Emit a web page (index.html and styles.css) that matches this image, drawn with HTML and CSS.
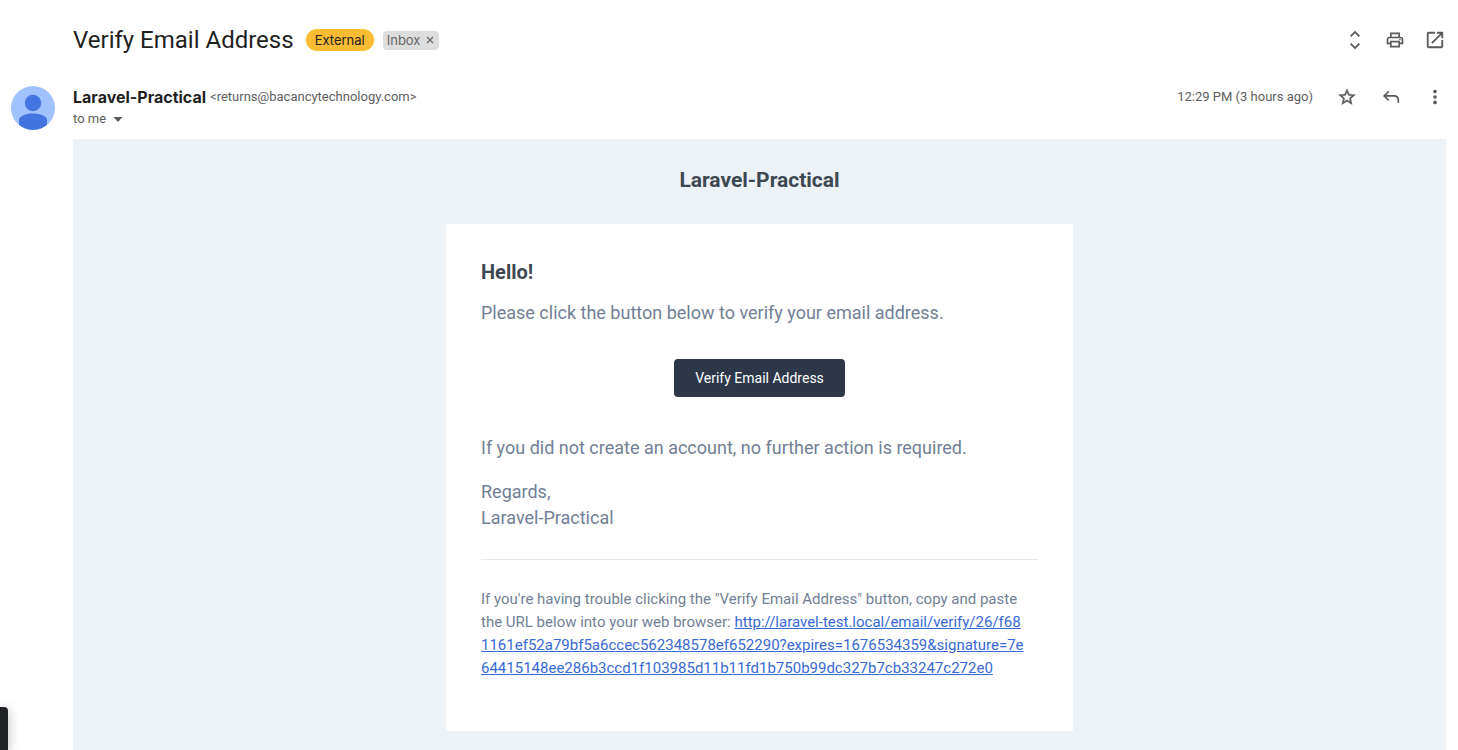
FILE: index.html
```html
<!DOCTYPE html>
<html lang="en">
<head>
<meta charset="utf-8">
<meta name="viewport" content="width=device-width, initial-scale=1">
<title>Verify Email Address</title>
<link rel="stylesheet" href="styles.css">
</head>
<body>
<main class="message">
  <header class="subject-bar">
    <h1 class="subject">Verify Email Address</h1>
    <span class="tag-external">External</span>
    <span class="tag-inbox">Inbox
      <button class="tag-remove" type="button" aria-label="Remove label Inbox"><svg width="8" height="8" viewBox="0 0 8 8"><path d="M1 1l6 6M7 1L1 7" stroke="#666" stroke-width="1.2" fill="none"/></svg></button>
    </span>
    <div class="subject-tools">
      <button class="icon-button" type="button" aria-label="Expand all"><svg width="20" height="20" viewBox="1 1 22 22"><path d="M12 4.600l4.100 4.100 1.400-1.400L12 1.800 6.500 7.300l1.400 1.400zM12 19.400l-4.100-4.100-1.400 1.400 5.500 5.500 5.500-5.500-1.400-1.400z"/></svg></button>
      <button class="icon-button" type="button" aria-label="Print"><svg width="20" height="20" viewBox="0 0 24 24"><path d="M19 8h-1V3H6v5H5c-1.660 0-3 1.340-3 3v6h4v4h12v-4h4v-6c0-1.660-1.340-3-3-3zM8 5h8v3H8V5zm8 14H8v-4h8v4zm2-4v-2H6v2H4v-4c0-.55.45-1 1-1h14c.55 0 1 .45 1 1v4h-2z"/><circle cx="18" cy="11.500" r="1"/></svg></button>
      <button class="icon-button" type="button" aria-label="Open in new window"><svg width="20" height="20" viewBox="1 1 22 22"><path d="M19 19H5V5h7V3H5a2 2 0 0 0-2 2v14a2 2 0 0 0 2 2h14c1.100 0 2-.9 2-2v-7h-2v7zM14 3v2h3.590l-9.830 9.830 1.410 1.410L19 6.410V10h2V3h-7z"/></svg></button>
    </div>
  </header>

  <section class="sender-bar">
    <svg class="avatar" width="44" height="44" viewBox="0 0 44 44" role="img" aria-label="Sender">
      <clipPath id="disc"><circle cx="22" cy="22" r="22"/></clipPath>
      <g clip-path="url(#disc)">
        <path fill="#a0c3ff" d="M0 0h44v44H0z"/>
        <circle cx="22" cy="17" r="8.200" fill="#4374e0"/>
        <path fill="#4374e0" d="M8 46V34c0-4 7-6.500 14-6.500S36 30 36 34v12z"/>
      </g>
    </svg>
    <div class="sender">
      <div class="sender-line"><strong class="sender-name">Laravel-Practical</strong> <span class="sender-email">&lt;returns@bacancytechnology.com&gt;</span></div>
      <div class="recipient">to me <button class="details" type="button" aria-label="Show details"><svg width="10" height="5" viewBox="0 0 10 5"><path d="M.5 0h9L5 5z"/></svg></button></div>
    </div>
    <div class="sender-tools">
      <time class="sent">12:29 PM (3 hours ago)</time>
      <button class="icon-button" type="button" aria-label="Star"><svg width="20" height="20" viewBox="0 0 24 24"><path stroke="#5a5a5a" stroke-width=".5" d="M22 9.240l-7.190-.62L12 2 9.190 8.630 2 9.240l5.460 4.730L5.820 21 12 17.270 18.180 21l-1.630-7.030L22 9.240zM12 15.400l-3.760 2.270 1-4.280-3.320-2.880 4.380-.38L12 6.100l1.710 4.040 4.380.38-3.320 2.880 1 4.280L12 15.400z"/></svg></button>
      <button class="icon-button" type="button" aria-label="Reply"><svg width="20" height="20" viewBox="0 0 24 24"><path fill="none" stroke="#5a5a5a" stroke-width="2" d="M9.300 5.200L3.800 10.700l5.500 5.500M4 10.700h11.500c3.500 0 5.300 2.300 5.300 5.300v3"/></svg></button>
      <button class="icon-button" type="button" aria-label="More"><svg width="20" height="20" viewBox="0 0 24 24"><circle cx="12" cy="5.500" r="2.200"/><circle cx="12" cy="12" r="2.200"/><circle cx="12" cy="18.500" r="2.200"/></svg></button>
    </div>
  </section>

  <article class="mail">
    <h2 class="brand">Laravel-Practical</h2>
    <div class="card">
      <h3 class="greeting">Hello!</h3>
      <p class="copy">Please click the button below to verify your email address.</p>
      <div class="action"><button class="verify" type="button">Verify Email Address</button></div>
      <p class="copy">If you did not create an account, no further action is required.</p>
      <p class="copy">Regards,<br>Laravel-Practical</p>
      <p class="fallback">If you're having trouble clicking the "Verify Email Address" button, copy and paste the URL below into your web browser: <a class="url" href="http://laravel-test.local/email/verify/26/f681161ef52a79bf5a6ccec562348578ef652290?expires=1676534359&amp;signature=7e64415148ee286b3ccd1f103985d11b11fd1b750b99dc327b7cb33247c272e0">http://laravel-test.local/email/verify/26/f68<wbr>1161ef52a79bf5a6ccec562348578ef652290?expires=1676534359&amp;signature=7e<wbr>64415148ee286b3ccd1f103985d11b11fd1b750b99dc327b7cb33247c272e0</a></p>
    </div>
  </article>
</main>
<div class="corner-panel"></div>
</body>
</html>
```
FILE: styles.css
```css
* { box-sizing: border-box; }

body {
  margin: 0;
  background: #fff;
  color: #5e5e5e;
  font: 13px/20px Inter, "Liberation Sans", sans-serif;
}

button {
  padding: 0;
  border: 0;
  background: none;
  font: inherit;
  color: inherit;
}

svg { display: block; fill: #5a5a5a; }

.message { padding: 16px 12px 0 11px; }

.subject-bar {
  display: flex;
  align-items: center;
  height: 48px;
  padding: 0 1px 0 62px;
}

.subject {
  margin: 0 12px 0 0;
  color: #1f1f1f;
  font: 400 24px/32px Roboto, sans-serif;
}

.tag-external {
  margin-right: 9px;
  padding: 0 9px;
  border-radius: 11px;
  background: #fbbc33;
  color: #222;
  line-height: 22px;
}

.tag-inbox {
  display: flex;
  align-items: center;
  gap: 6px;
  padding: 0 5px 0 4px;
  border-radius: 4px;
  background: #ddd;
  color: #666;
  line-height: 19px;
}

.subject-tools {
  display: flex;
  gap: 20px;
  margin-left: auto;
}

.sender-bar {
  display: flex;
  gap: 18px;
  margin-top: 22px;
  padding-right: 1px;
}

.sender {
  font-family: Roboto, sans-serif;
  line-height: 22px;
}

.sender-line {
  display: flex;
  align-items: center;
  gap: 4px;
}

.sender-name {
  color: #1f1f1f;
  font-family: Inter, sans-serif;
  font-size: 16px;
  font-weight: 700;
}

.recipient {
  display: flex;
  align-items: center;
  gap: 7px;
}

.sender-tools {
  display: flex;
  align-items: center;
  gap: 24px;
  height: 22px;
  margin-left: auto;
  font-family: Roboto, sans-serif;
}

.mail {
  min-height: calc(100vh - 139px);
  margin: 9px 0 0 62px;
  padding: 28px 20px 19px;
  background: #edf2f7;
  font-family: Roboto, sans-serif;
}

.brand {
  margin: 0 0 31px;
  color: #3d4852;
  font-size: 21px;
  line-height: 26px;
  text-align: center;
}

.card {
  max-width: 627px;
  margin: 0 auto;
  padding: 35px 35px 51px;
  border-radius: 2px;
  background: #fff;
}

.greeting {
  margin: 0 0 15px;
  color: #3d4852;
  font-size: 20px;
  line-height: 26px;
}

.copy {
  margin: 0 0 18px;
  color: #718096;
  font-size: 18px;
  line-height: 26px;
}

.action {
  display: flex;
  justify-content: center;
  padding: 15px 0 38px;
}

.verify {
  padding: 0 21px;
  border-radius: 4px;
  background: #2d3748;
  color: #fff;
  font-size: 14px;
  line-height: 38px;
}

.fallback {
  margin: 28px 0 0;
  padding-top: 28px;
  border-top: 1px solid #e8e5ef;
  color: #718096;
  font-size: 15px;
  line-height: 23px;
}

.url {
  color: #3869d4;
  overflow-wrap: break-word;
}

.corner-panel {
  position: fixed;
  left: 0;
  bottom: 0;
  width: 8px;
  height: 43px;
  border-radius: 0 4px 0 0;
  background: #202124;
  box-shadow: 0 2px 12px rgba(0, 0, 0, 0.3);
}
```
